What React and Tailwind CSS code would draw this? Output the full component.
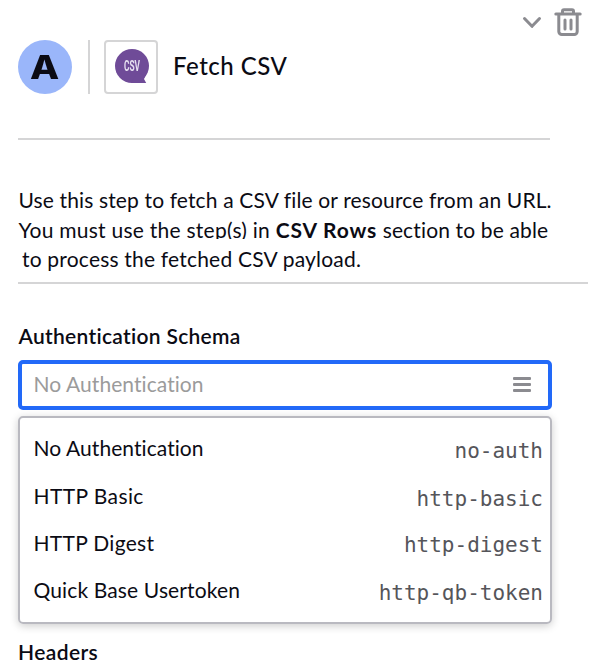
import React from 'react';

const schemas = [
    { name: 'No Authentication', value: 'no-auth', row: 'h-12', label: 'tracking-[0.07px]' },
    { name: 'HTTP Basic', value: 'http-basic', row: 'h-12', label: 'tracking-[0.4px]' },
    { name: 'HTTP Digest', value: 'http-digest', row: 'h-[45px]', label: 'tracking-[0.3px]' },
    { name: 'Quick Base Usertoken', value: 'http-qb-token', row: 'h-[50px]', label: 'tracking-[0.13px]' },
];

const CsvIcon = () => (
    <svg width="36" height="36" viewBox="0 0 36 36" className="overflow-visible blur-[0.5px]">
        <circle cx="19" cy="17" r="17" fill="#6f4b98" />
        <path d="M18 34h15.200l-2.200-4 2-4-9-2z" fill="#6f4b98" />
        <text
            x="11"
            y="22"
            textLength="16"
            lengthAdjust="spacingAndGlyphs"
            fill="#e6dff0"
            className="font-['Roboto',sans-serif] text-[14px] font-bold"
        >
            CSV
        </text>
    </svg>
);

const Toolbar = () => (
    <div className="flex h-10 justify-end pr-[9px] pt-[8px] text-[#8b8b90]">
        <svg width="20" height="14" viewBox="0 0 20 14" fill="none" stroke="currentColor" strokeWidth="3" strokeLinecap="round" strokeLinejoin="round" className="mr-3 mt-[8px]">
            <path d="M2.500 2.500l7.500 7.800 7.500-7.800" />
        </svg>
        <svg width="28" height="28" viewBox="0 0 28 28" fill="none" stroke="currentColor" strokeWidth="3" strokeLinecap="round" strokeLinejoin="round">
            <path d="M1.800 6h24.400" />
            <path d="M8.500 5.500V3.200a1.500 1.500 0 0 1 1.500-1.500h8a1.500 1.500 0 0 1 1.500 1.500v2.300" />
            <path d="M4.800 6.500v17a3 3 0 0 0 3 3h12.400a3 3 0 0 0 3-3v-17" />
            <path d="M11 12v9M17 12v9" />
        </svg>
    </div>
);

const App = () => {
    return (
        <div className="h-[669px] w-[591px] overflow-hidden bg-white font-['Lato',sans-serif] text-[21px] text-[#0b0b14]">
            <Toolbar />

            <div className="flex h-[54px] items-center pl-[18px]">
                <div className="flex size-[54px] items-center justify-center rounded-full bg-[#9ab6fa] pt-px font-['Inter',sans-serif] text-[33px] font-extrabold">
                    <span className="scale-x-115">A</span>
                </div>
                <div className="ml-4 h-full w-[2px] bg-[#d5d5d6]" />
                <div className="ml-[14px] flex size-[54px] items-center justify-center rounded border-2 border-[#d5d5d6]">
                    <CsvIcon />
                </div>
                <h1 className="ml-[15px] whitespace-nowrap pb-[2px] text-[24px] font-medium tracking-[0.5px]">Fetch CSV</h1>
            </div>

            <hr className="ml-[18px] mt-11 w-[532px] border-0 border-t-2 border-[#d5d5d6]" />

            <div className="ml-[18px] mt-[45px] h-[97px] w-[570px] whitespace-nowrap leading-[30px]">
                <p className="pl-[0.5px] tracking-[0.14px]">Use this step to fetch a CSV file or resource from an URL.</p>
                <p className="pl-[0.5px] tracking-[0.25px]">
                    You must use the step(s) in <strong className="tracking-[0.85px]">CSV Rows</strong>
                    <span className="tracking-[0.15px]"> section to be able</span>
                </p>
                {/* last line sits on its own background, over the descenders above it */}
                <p className="relative -mt-[6px] bg-white pl-1 pt-[5px] tracking-[0.2px]">to process the fetched CSV payload.</p>
            </div>

            <hr className="ml-[18px] w-[570px] border-0 border-t-2 border-[#d5d5d6]" />

            <div className="ml-[18px] mt-[37px] w-[534px]">
                <label className="block h-[39px] pl-[0.5px] leading-[30px] font-semibold tracking-[0.3px]">Authentication Schema</label>
                <div className="flex h-[50px] items-center justify-between rounded-[5px] border-4 border-[#2269f8] pl-[11.5px] pr-[17px]">
                    <span className="pb-[2px] tracking-[0.07px] text-[#9b9b9b]">No Authentication</span>
                    <div className="mb-[2px] flex flex-col gap-[3px]">
                        <div className="h-[3px] w-[18px] rounded-[1px] bg-[#8b8b90]" />
                        <div className="h-[3px] w-[18px] rounded-[1px] bg-[#8b8b90]" />
                        <div className="h-[3px] w-[18px] rounded-[1px] bg-[#8b8b90]" />
                    </div>
                </div>

                <ul className="mt-[6px] h-[208px] rounded-[5px] border-2 border-[#b9b9c0] pl-[13.5px] pr-[7px] pt-[7px] shadow-[0_2px_8px_rgba(0,0,0,0.2)]">
                    {schemas.map((schema) => (
                        <li key={schema.value} className={`flex items-center justify-between ${schema.row}`}>
                            <span className={`pb-[2px] ${schema.label}`}>{schema.name}</span>
                            <span className="pt-[5px] font-['DejaVu_Sans_Mono',monospace] text-[#55555a]">{schema.value}</span>
                        </li>
                    ))}
                </ul>
            </div>

            <h2 className="ml-[18px] mt-[13px] leading-[30px] font-semibold tracking-[0.4px]">Headers</h2>
        </div>
    );
};

export default App;
